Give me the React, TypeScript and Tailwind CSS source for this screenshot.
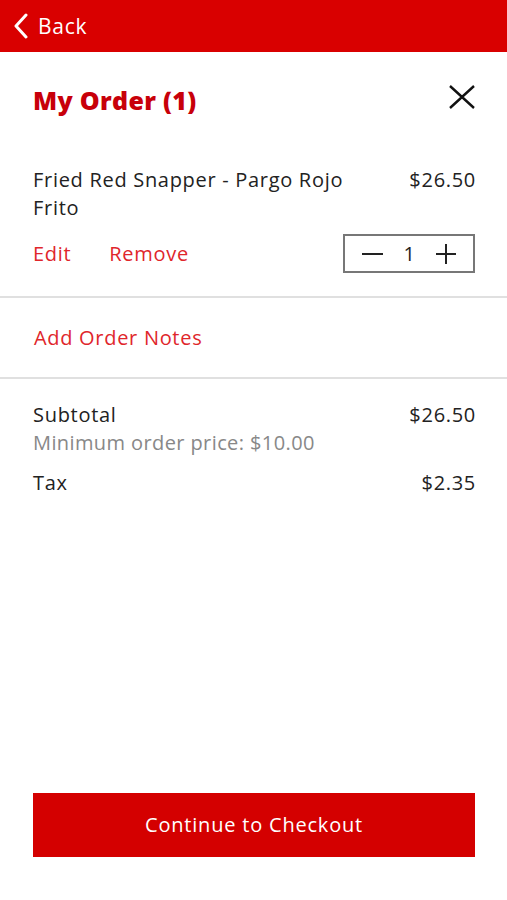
export default function App() {
  return (
    <div
      className="flex min-h-[900px] w-full flex-col bg-white tracking-[0.7px] text-[#222]"
      style={{ fontFamily: '"Open Sans", "Noto Sans", sans-serif' }}
    >
      <header className="flex h-[52px] items-center bg-[#d90000] px-3 text-white">
        <svg width="18" height="26" viewBox="0 0 18 26" fill="none" className="mr-2">
          <path d="M14 2 L4 13 L14 24" stroke="white" strokeWidth="3" strokeLinecap="round" strokeLinejoin="round" />
        </svg>
        <span className="text-[21px] leading-none">Back</span>
      </header>

      <div className="flex items-center justify-between pl-[33px] pr-[32px] pt-[36px]">
        <h1 className="text-[25px] font-extrabold leading-none tracking-[0.3px] text-[#c8000a]">My Order (1)</h1>
        <svg width="26" height="24" viewBox="0 0 26 24" className="-mt-2">
          <path d="M1 1 L25 23 M25 1 L1 23" stroke="#111" strokeWidth="2.4" />
        </svg>
      </div>

      <div className="pl-[33px] pr-[32px] pt-[53px] pb-[23px]">
        <div className="flex justify-between gap-6 text-[20px] leading-[28px]">
          <div className="flex-1">Fried Red Snapper - Pargo Rojo Frito</div>
          <div className="-mr-[1px]">$26.50</div>
        </div>
        <div className="mt-[12px] flex items-center justify-between">
          <div className="flex gap-[38px] text-[20px] text-[#e0262b]">
            <button className="tracking-[0.7px]">Edit</button>
            <button className="tracking-[0.7px]">Remove</button>
          </div>
          <div className="flex h-[39px] w-[132px] items-center justify-between border-2 border-[#777] px-[17px]">
            <svg width="21" height="2" viewBox="0 0 21 2">
              <rect width="21" height="2" fill="#222" />
            </svg>
            <span className="text-[20px] leading-none">1</span>
            <svg width="20" height="20" viewBox="0 0 20 20">
              <path d="M10 0 V20 M0 10 H20" stroke="#222" strokeWidth="2" />
            </svg>
          </div>
        </div>
      </div>

      <div className="h-[2px] bg-[#e0e0e0]" />
      <div className="flex h-[79px] items-center px-[34px] text-[20px] text-[#e0262b]">Add Order Notes</div>
      <div className="h-[2px] bg-[#e0e0e0]" />

      <div className="pl-[33px] pr-[32px] pt-[22px] text-[20px] leading-[28px]">
        <div className="flex justify-between">
          <span>Subtotal</span>
          <span className="-mr-[1px]">$26.50</span>
        </div>
        <div className="tracking-[0.4px] text-[#888]">Minimum order price: $10.00</div>
        <div className="mt-[12px] flex justify-between">
          <span>Tax</span>
          <span className="-mr-[1px]">$2.35</span>
        </div>
      </div>

      <div className="flex-1" />
      <div className="pl-[33px] pr-[32px] pb-[43px]">
        <button className="h-[64px] w-full bg-[#d40000] text-[20px] tracking-[0.8px] text-white">Continue to Checkout</button>
      </div>
    </div>
  );
}
